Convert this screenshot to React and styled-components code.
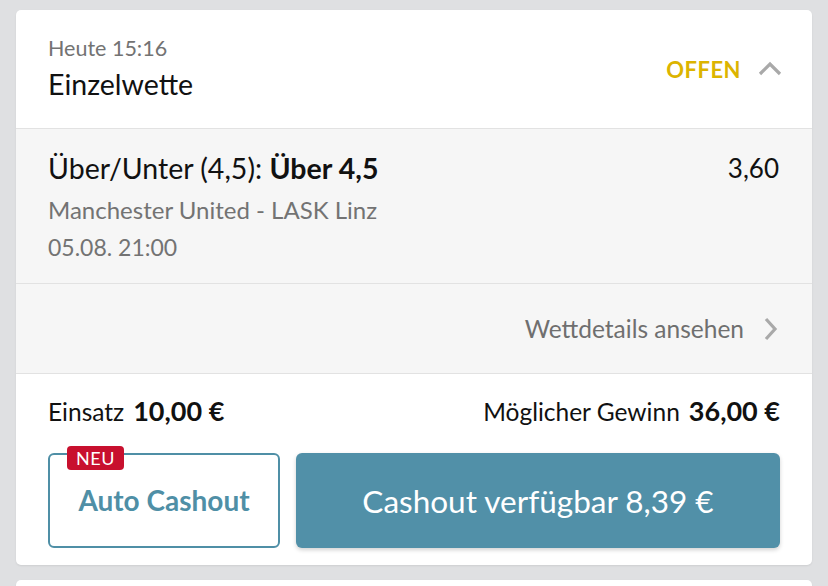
import React from "react";
import styled, { createGlobalStyle } from "styled-components";

const GlobalStyle = createGlobalStyle`
  html, body {
    margin: 0;
    padding: 0;
    background: #dfe0e2;
    font-family: Lato, "Noto Sans", sans-serif;
  }
`;

const Page = styled.div`
  width: 828px;
  height: 586px;
  overflow: hidden;
  padding: 10px 16px 0;
  box-sizing: border-box;
  display: flex;
  flex-direction: column;
  gap: 15px;
`;

const Card = styled.div`
  background: #fff;
  border-radius: 5px;
  overflow: hidden;
  box-shadow: 0 1px 2px rgba(0, 0, 0, 0.08);
  flex-shrink: 0;
  height: ${(p) => (p.h ? `${p.h}px` : "auto")};
`;

const Header = styled.div`
  height: 118px;
  padding: 0 30px 0 32px;
  display: flex;
  align-items: center;
  justify-content: space-between;
  border-bottom: 1px solid #e2e2e2;
`;

const TitleBlock = styled.div`
  align-self: flex-start;
  margin-top: 24px;
  display: flex;
  flex-direction: column;
  gap: 5px;
`;

const Muted = styled.div`
  color: #737373;
  font-size: ${(p) => p.size || 24}px;
  line-height: ${(p) => p.lh || 36}px;
  margin-top: ${(p) => p.mt || 0}px;
`;

const Title = styled.div`
  color: #111;
  font-size: 28.5px;
  line-height: 34px;
`;

const Status = styled.div`
  display: flex;
  align-items: center;
  gap: 17px;
  color: #dcb400;
  font-size: 22px;
  font-weight: 700;
  letter-spacing: 0.5px;
`;

const Section = styled.div`
  background: #f6f6f6;
  border-bottom: 1px solid #e2e2e2;
  padding: ${(p) => p.pad};
  display: flex;
  align-items: ${(p) => p.align || "flex-start"};
  justify-content: ${(p) => p.justify || "space-between"};
  height: ${(p) => p.h}px;
  box-sizing: border-box;
`;

const Selection = styled.div`
  font-size: 28.5px;
  line-height: 36px;
  color: #111;
  b {
    font-weight: 700;
  }
`;

const Odds = styled.div`
  font-size: 26px;
  line-height: 36px;
  color: #111;
`;

const DetailsLink = styled.div`
  display: flex;
  align-items: center;
  gap: 14px;
  color: #6f6f6f;
  font-size: 24.5px;
`;

const Footer = styled.div`
  padding: 22px 32px 17px;
  display: flex;
  flex-direction: column;
  gap: 26px;
`;

const Amounts = styled.div`
  display: flex;
  justify-content: space-between;
  align-items: baseline;
  font-size: 24.5px;
  line-height: 30px;
  color: #111;
  b {
    font-size: 27px;
    font-weight: 700;
    margin-left: 9px;
  }
`;

const Buttons = styled.div`
  display: flex;
  gap: 16px;
  height: 95px;
`;

const AutoButton = styled.button`
  position: relative;
  width: 232px;
  border: 2px solid #4f8fa6;
  border-radius: 6px;
  background: #fff;
  color: #4f8fa6;
  font-family: inherit;
  font-size: 28px;
  font-weight: 700;
  padding: 0 0 2px;
`;

const Badge = styled.span`
  position: absolute;
  top: -9px;
  left: 17px;
  background: #c8102e;
  color: #fff;
  font-size: 18px;
  font-weight: 400;
  line-height: 24px;
  padding: 0 9px;
  border-radius: 4px;
  letter-spacing: 0.5px;
`;

const CashoutButton = styled.button`
  flex: 1;
  border: none;
  border-radius: 6px;
  background: #5190a8;
  color: #fff;
  font-family: inherit;
  font-size: 31.5px;
  box-shadow: 0 2px 4px rgba(0, 0, 0, 0.18);
`;

const Chevron = ({ dir }) => (
  <svg width="24" height="24" viewBox="0 0 24 24" fill="none">
    <path
      d={dir === "up" ? "M2 17 L12 7 L22 17" : "M8 2 L17 12 L8 22"}
      stroke="#a9a9a9"
      strokeWidth="3.2"
    />
  </svg>
);

export default function App() {
  return (
    <Page>
      <GlobalStyle />
      <Card>
        <Header>
          <TitleBlock>
            <Muted size={21.5} lh={28}>
              Heute 15:16
            </Muted>
            <Title>Einzelwette</Title>
          </TitleBlock>
          <Status>
            OFFEN
            <Chevron dir="up" />
          </Status>
        </Header>
        <Section pad="21px 33px 0 32px" h={155}>
          <div>
            <Selection>
              Über/Unter (4,5): <b>Über 4,5</b>
            </Selection>
            <Muted mt={6}>Manchester United - LASK Linz</Muted>
            <Muted mt={1} size={23}>
              05.08. 21:00
            </Muted>
          </div>
          <Odds>3,60</Odds>
        </Section>
        <Section pad="0 30px" h={90} align="center" justify="flex-end">
          <DetailsLink>
            Wettdetails ansehen
            <Chevron dir="right" />
          </DetailsLink>
        </Section>
        <Footer>
          <Amounts>
            <span>
              Einsatz<b>10,00 €</b>
            </span>
            <span>
              Möglicher Gewinn<b>36,00 €</b>
            </span>
          </Amounts>
          <Buttons>
            <AutoButton>
              <Badge>NEU</Badge>
              Auto Cashout
            </AutoButton>
            <CashoutButton>Cashout verfügbar 8,39 €</CashoutButton>
          </Buttons>
        </Footer>
      </Card>
      <Card h={40} />
    </Page>
  );
}
